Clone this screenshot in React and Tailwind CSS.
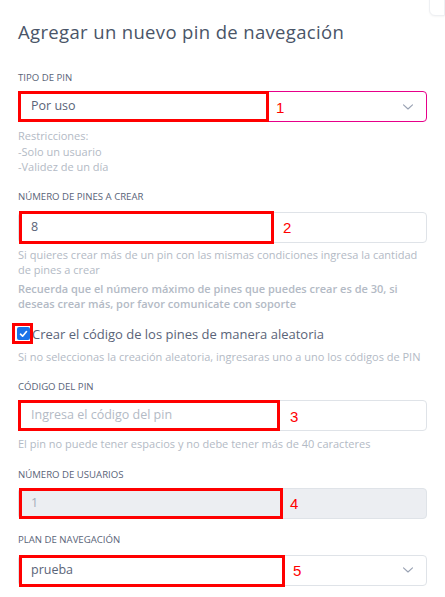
import React from "react";

const font = { fontFamily: '"Open Sans", "Noto Sans", sans-serif' };

function Chevron() {
  return (
    <svg width="12" height="8" viewBox="0 0 12 8" fill="none" className="shrink-0">
      <path d="M1.5 1.8 L6 6 L10.5 1.8" stroke="#98a1b2" strokeWidth="1.1" strokeLinecap="round" strokeLinejoin="round" />
    </svg>
  );
}

function Mark({ w, num, numLeft, className = "" }) {
  return (
    <>
      <div className={`pointer-events-none absolute border-[3px] border-[#ff0000] ${className}`} style={{ width: w }} />
      <span className="pointer-events-none absolute top-1/2 -translate-y-1/2 text-[15px] leading-none text-[#ff0000]" style={{ left: numLeft, fontFamily: '"Liberation Sans", sans-serif' }}>{num}</span>
    </>
  );
}

function Label({ children }) {
  return <div className="text-[9.6px] leading-[12px] font-medium uppercase text-[#5a6478]">{children}</div>;
}

export default function App() {
  return (
    <div className="relative h-[597px] w-[445px] overflow-hidden bg-white" style={font}>
      <div className="absolute right-0 top-[-8px] h-[24px] w-[16px] rounded-bl-[6px] border border-[#eef0f3] bg-white shadow-[0_1px_2px_rgba(0,0,0,0.04)]" />
      <div className="px-[18px] pt-[20px]">
        <h1 className="text-[18.5px] leading-[24px] font-normal tracking-[0.35px] text-[#4a5568]">Agregar un nuevo pin de navegación</h1>

        <div className="mt-[28px]"><Label>Tipo de pin</Label></div>
        <div className="relative mt-[7px] flex h-[31px] w-[409px] items-center justify-between rounded-[4px] border border-[#e6008a] px-[12px]">
          <span className="text-[12.5px] text-[#5a6478]">Por uso</span>
          <Chevron />
          <Mark w={251} num="1" numLeft={257} className="left-[-1px] top-[-1px] h-[31px]" />
        </div>
        <div className="mt-[6px] text-[11px] leading-[15.5px] font-medium text-[#b3bac5]">
          <div>Restricciones:</div>
          <div>-Solo un usuario</div>
          <div>-Validez de un día</div>
        </div>

        <div className="mt-[16px]"><Label>Número de pines a crear</Label></div>
        <div className="relative mt-[9px] flex h-[31px] w-[409px] items-center rounded-[4px] border border-[#dfe3e8] px-[12px]">
          <span className="text-[12.5px] text-[#5a6478]">8</span>
          <Mark w={255} num="2" numLeft={264} className="left-[0px] top-[-2px] h-[33px]" />
        </div>
        <div className="mt-[4px] text-[11px] leading-[15.5px] font-medium text-[#b3bac5]">
          Si quieres crear más de un pin con las mismas condiciones ingresa la cantidad de pines a crear
        </div>
        <div className="mt-[3px] pr-[20px] text-[11px] leading-[15.5px] font-semibold text-[#b3bac5]">
          Recuerda que el número máximo de pines que puedes crear es de 30, si deseas crear más, por favor comunicate con soporte
        </div>

        <div className="relative mt-[12px] flex items-center">
          <div className="ml-[-1px] flex h-[13px] w-[13px] items-center justify-center rounded-[2px] bg-[#1a73e8]">
            <svg width="9" height="8" viewBox="0 0 9 8"><path d="M1.5 4.2 L3.6 6.2 L7.5 1.6" stroke="white" strokeWidth="1.6" fill="none" strokeLinecap="round" strokeLinejoin="round" /></svg>
          </div>
          <span className="ml-[2px] text-[13px] leading-[20px] text-[#5a6478]">Crear el código de los pines de manera aleatoria</span>
          <div className="pointer-events-none absolute left-[-6px] top-[-1px] h-[21px] w-[21px] border-[3px] border-[#ff0000]" />
        </div>
        <div className="mt-[5px] text-[11px] leading-[15.5px] font-medium text-[#b3bac5]">
          Si no seleccionas la creación aleatoria, ingresaras uno a uno los códigos de PIN
        </div>

        <div className="mt-[17px]"><Label>Código del pin</Label></div>
        <div className="relative mt-[7px] flex h-[31px] w-[409px] items-center rounded-[4px] border border-[#dfe3e8] px-[12px]">
          <span className="text-[12.5px] text-[#b3bac5]">Ingresa el código del pin</span>
          <Mark w={262} num="3" numLeft={271} className="left-[-1px] top-[-1px] h-[31px]" />
        </div>
        <div className="mt-[5px] text-[11px] leading-[15.5px] font-medium text-[#b3bac5]">
          El pin no puede tener espacios y no debe tener más de 40 caracteres
        </div>

        <div className="mt-[17px]"><Label>Número de usuarios</Label></div>
        <div className="relative mt-[7px] flex h-[31px] w-[409px] items-center rounded-[4px] border border-[#dfe3e8] bg-[#eceef2] px-[12px]">
          <span className="text-[12.5px] text-[#a4acb9]">1</span>
          <Mark w={264} num="4" numLeft={271} className="left-[0px] top-[-1px] h-[31px]" />
        </div>

        <div className="mt-[15px]"><Label>Plan de navegación</Label></div>
        <div className="relative mt-[9px] flex h-[31px] w-[409px] items-center justify-between rounded-[4px] border border-[#dfe3e8] px-[12px]">
          <span className="text-[12.5px] text-[#5a6478]">prueba</span>
          <Chevron />
          <Mark w={266} num="5" numLeft={274} className="left-[0px] top-[-1px] h-[32px]" />
        </div>
      </div>
    </div>
  );
}
